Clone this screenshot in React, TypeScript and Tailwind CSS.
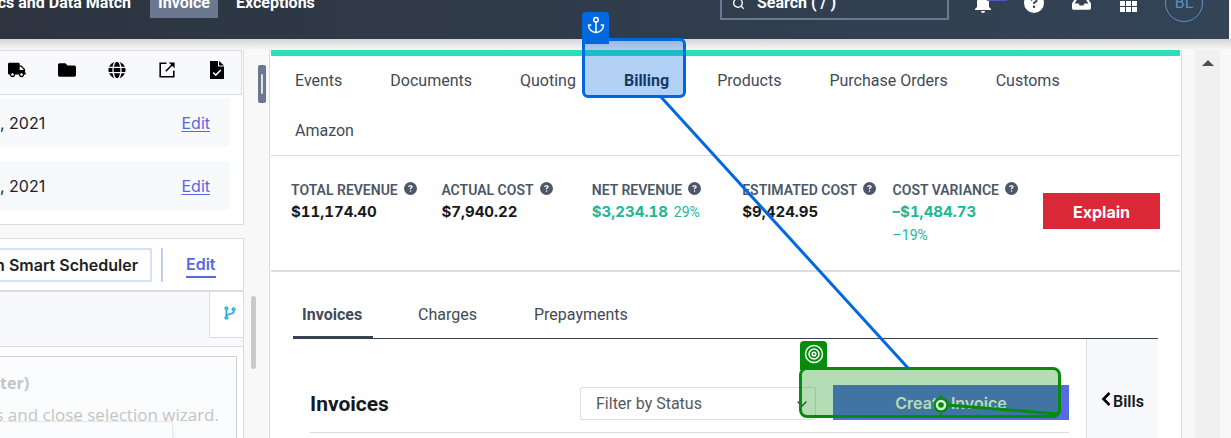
import React from "react";
import { FaTruck, FaFolder, FaInbox } from "react-icons/fa";
import { FaCircleQuestion } from "react-icons/fa6";
import { AiOutlineBranches } from "react-icons/ai";
import { MdNotifications } from "react-icons/md";
import { LuAnchor } from "react-icons/lu";
import { Search, ChevronDown } from "lucide-react";

function Globe() {
  return (
    <svg viewBox="0 0 18 18" className="size-[18px]" aria-hidden="true">
      <circle cx="9" cy="9" r="8.6" fill="#000" />
      <g fill="none" stroke="#f8f9fd" strokeWidth="1.3">
        <ellipse cx="9" cy="9" rx="4" ry="9" />
        <path d="M0 6.3h18M0 11.6h18" />
      </g>
    </svg>
  );
}

function OpenExternal() {
  return (
    <svg viewBox="0 0 18 18" className="size-[18px]" fill="none" stroke="#000" strokeWidth="1.6" aria-hidden="true">
      <path d="M8.5 2.2H2.2v13.6h13.6V9.8" />
      <path d="M7.8 10.2l6.4-6.4" />
      <path d="M10.8 1.5h5.8v5.8z" fill="#000" stroke="none" />
    </svg>
  );
}

function FileCheck() {
  return (
    <svg viewBox="0 0 16 18" className="h-[18px] w-4" aria-hidden="true">
      <path d="M1 0h8v5.5h6V18H1z" fill="#000" />
      <path d="M10 0l5 4.6h-5z" fill="#000" />
      <path d="M4.2 11.5l2.6 2.6 5-5.2" fill="none" stroke="#fff" strokeWidth="1.5" />
    </svg>
  );
}

const tools = [
  { label: "Shipping", icon: <FaTruck className="size-[18px]" /> },
  { label: "Folder", icon: <FaFolder className="size-[18px]" /> },
  { label: "Web", icon: <Globe /> },
  { label: "Open", icon: <OpenExternal /> },
  { label: "Approve file", icon: <FileCheck /> },
];

const tabs = ["Events", "Documents", "Quoting", "Billing", "Products", "Purchase Orders", "Customs", "Amazon"];

const metrics = [
  { label: "TOTAL REVENUE", value: "$11,174.40" },
  { label: "ACTUAL COST", value: "$7,940.22" },
  { label: "NET REVENUE", value: "$3,234.18", percent: "29%", good: true },
  { label: "ESTIMATED COST", value: "$9,424.95" },
  { label: "COST VARIANCE", value: "–$1,484.73", percent: "–19%", good: true },
];

function Header() {
  return (
    <div className="shrink-0 overflow-hidden pr-0.5">
      <header className="-mt-[33px] flex h-[72px] items-center bg-linear-to-r from-[#2d3440] to-[#334457] text-base font-bold text-white">
        <nav className="flex items-center whitespace-nowrap">
          <a href="#match" className="flex w-[131px] justify-end">cs and Data Match</a>
          <a href="#invoice" className="ml-[19px] flex h-[30px] w-[68px] items-center justify-center bg-[#6b7890]">Invoice</a>
          <a href="#exceptions" className="ml-[18px]">Exceptions</a>
        </nav>
        <div className="ml-auto flex items-center">
          <label className="flex h-[34px] w-[229px] items-center gap-3 border-2 border-[#6b7890] pl-2.5">
            <Search className="size-[13px] shrink-0" strokeWidth={2.5} />
            <input aria-label="Search" placeholder="Search ( / )" className="w-full bg-transparent outline-none placeholder:text-white placeholder:opacity-100" />
          </label>
          <button aria-label="Notifications" className="relative ml-6 flex w-5 justify-center">
            <MdNotifications className="size-6 shrink-0" />
            <span className="absolute -top-2 left-3 h-[18px] w-6 rounded bg-[#4f5bc4]" />
          </button>
          <button aria-label="Help" className="ml-[31px]"><FaCircleQuestion className="size-5" /></button>
          <button aria-label="Inbox" className="ml-7"><FaInbox className="size-[19px]" /></button>
          <button aria-label="Apps" className="ml-[29px] grid grid-cols-3 gap-px">
            {Array.from({ length: 9 }, (_, i) => <span key={i} className="size-[5px] bg-white" />)}
          </button>
          <button aria-label="Account" className="mr-[26px] ml-7 flex size-[38px] items-center justify-center rounded-full border border-[#5b93c8] text-base font-normal text-[#5b8fbe]">BL</button>
        </div>
      </header>
    </div>
  );
}

function DateRow() {
  return (
    <div className="flex h-[49px] w-[230px] items-center justify-between rounded-r bg-[#f8f9fd] pr-5 font-[Inter,sans-serif] text-base">
      <span>, 2021</span>
      <a href="#edit" className="text-[#5868e4] underline underline-offset-2">Edit</a>
    </div>
  );
}

function Sidebar() {
  return (
    <aside className="flex w-[244px] shrink-0 flex-col text-[#1c1e22]">
      <section className="border-r border-b border-[#dcdcdc] bg-white pb-3.5">
        <div className="mr-px flex h-[45px] items-center gap-8 border-y border-r border-[#dcdcdc] bg-[#f8f9fd] pb-1.5 pl-2 text-black">
          {tools.map((t) => <button key={t.label} aria-label={t.label} className="flex w-[18px] justify-center">{t.icon}</button>)}
        </div>
        <div className="flex flex-col gap-3.5 pt-[3px]"><DateRow /><DateRow /></div>
      </section>
      <section className="mt-[13px] flex grow flex-col border-t border-r border-[#dcdcdc] bg-white">
        <div className="flex h-[53px] shrink-0 items-center border-b-2 border-[#dcdcdc] font-[Inter,sans-serif] text-base font-semibold">
          <button className="flex h-[34px] w-[152px] items-center justify-end border-2 border-l-0 border-[#d7e1f5] pr-3 whitespace-nowrap">h Smart Scheduler</button>
          <span className="ml-[9px] h-[34px] w-0.5 bg-[#c3cfe6]" />
          <a href="#schedule" className="ml-[23px] border-b-2 border-[#5868e4] text-[#5868e4]">Edit</a>
        </div>
        <div className="flex h-[55px] shrink-0 justify-end border-b border-[#dcdcdc] bg-[#f8f9fd]">
          <button aria-label="Branch" className="flex h-[46px] w-[34px] items-center justify-center border-b border-l border-[#dcdcdc] bg-white pb-1 pl-1.5 text-[#25addb]">
            <AiOutlineBranches className="size-4" strokeWidth={40} />
          </button>
        </div>
        <div className="mt-[9px] mr-1.5 flex grow flex-col border-t border-r border-[#cfcfcf] bg-[#fafcfe] pt-3.5 font-['Open_Sans',sans-serif] text-[#c4c4c4]">
          <strong className="text-base leading-6">ter)</strong>
          <p className="mt-2 flex justify-end pr-[17px] text-[17px] leading-6 whitespace-nowrap">s and close selection wizard.</p>
          <div className="-mt-1.5 h-10 w-[173px] border-t border-r border-[#e6e6e6] shadow-md" />
        </div>
      </section>
    </aside>
  );
}

function Metrics() {
  return (
    <section className="grid h-[116px] shrink-0 grid-cols-[repeat(5,1fr)_117px] border-b-2 border-[#dcdcdc] px-5 pt-[23px]">
      {metrics.map((m) => (
        <div key={m.label} className="whitespace-nowrap">
          <div className="flex items-center gap-1.5 text-sm leading-[22px] font-semibold text-[#4c5768]">
            {m.label}
            <FaCircleQuestion className="mb-[3px] size-[13px]" />
          </div>
          <div className={m.good ? "flex max-w-[130px] flex-wrap items-center gap-x-1.5 font-[Inter,sans-serif] text-[15px] leading-[22px] font-bold text-[#21b796] tabular-nums" : "font-[Inter,sans-serif] text-[15px] leading-[22px] font-bold text-[#17191d] tabular-nums"}>
            <span>{m.value}</span>
            {m.percent && <span className={m.percent === "29%" ? "font-[Roboto,sans-serif] text-sm leading-[22px] font-normal" : "w-full font-[Roboto,sans-serif] text-sm leading-6 font-normal"}>{m.percent}</span>}
          </div>
        </div>
      ))}
      <button className="mt-3.5 h-9 bg-[#da2839] pt-px font-[Inter,sans-serif] text-base font-bold text-white">Explain</button>
    </section>
  );
}

function Main() {
  return (
    <main className="flex min-w-0 grow flex-col border-x border-[#dcdcdc] bg-white px-px">
      <div className="h-1.5 shrink-0 bg-[#29dfb8]" />
      <nav className="flex shrink-0 flex-wrap gap-y-px border-b border-[#dcdcdc] text-base text-[#424a57]">
        {tabs.map((t) => (
          <a key={t} href={"#" + t} className={t === "Billing" ? "flex h-[49px] items-center px-6 font-bold text-[#1f2733]" : "flex h-[49px] items-center px-6"}>{t}</a>
        ))}
      </nav>
      <Metrics />
      <div className="flex grow flex-col px-[22px]">
        <nav className="mt-5 flex h-[47px] shrink-0 gap-9 border-b border-[#39424f] text-base text-[#424a57]">
          <a href="#invoices" className="-mb-px h-[47px] min-w-20 border-b-3 border-[#39424f] px-[9px] pt-[11px] leading-6 font-bold">Invoices</a>
          <a href="#charges" className="min-w-20 px-[9px] pt-[11px] leading-6">Charges</a>
          <a href="#prepayments" className="px-[9px] pt-[11px] leading-6">Prepayments</a>
        </nav>
        <div className="flex grow">
          <section className="grow px-[17px]">
            <div className="flex h-[94px] items-end border-b border-[#dcdcdc] pb-3">
              <h2 className="grow text-[21px] leading-8 font-bold text-[#17191d]">Invoices</h2>
              <div className="relative mr-[17px] flex items-center">
                <select aria-label="Filter by Status" className="h-[33px] w-[236px] appearance-none rounded-xs border border-[#dfdfdf] bg-white pt-px pl-[15px] text-base text-[#55585e]">
                  <option>Filter by Status</option>
                </select>
                <ChevronDown className="pointer-events-none absolute right-1.5 size-4 text-[#333]" />
              </div>
              <button className="h-[35px] w-[236px] bg-[#586ae6] font-[Inter,sans-serif] text-base font-semibold text-white">Create Invoice</button>
            </div>
          </section>
          <button className="flex w-[72px] items-start gap-0.5 border-l border-[#dcdcdc] bg-[#f8f9fd] pt-[51px] pl-3.5 text-base leading-6 font-semibold text-[#17191d]">
            <svg viewBox="0 0 10 14" className="mt-0.5 h-3.5 w-2.5" aria-hidden="true"><path d="M8.5 1L2.5 7l6 6" fill="none" stroke="#000" strokeWidth="2.6" /></svg>
            Bills
          </button>
        </div>
      </div>
    </main>
  );
}

function Annotations() {
  return (
    <div className="pointer-events-none absolute inset-0">
      <div className="absolute top-3 left-[582px] flex h-8 w-[27px] justify-center rounded-t bg-[#0069e0] pt-1 text-white"><LuAnchor className="size-[18px]" /></div>
      <div className="absolute top-[38px] left-[582px] h-[60px] w-[104px] rounded-md border-3 border-[#0069e0]" />
      <div className="absolute top-[39px] left-[583px] h-[58px] w-[102px] rounded-md bg-[#0069e0]/30" />
      <div className="absolute top-[341px] left-[800px] flex h-[29px] w-[27px] justify-center rounded-t bg-[#058c0a] pt-[3px]">
        <svg viewBox="0 0 20 20" className="size-5" fill="none" stroke="#fff" strokeWidth="1.5" aria-hidden="true">
          <circle cx="10" cy="10" r="8.5" /><circle cx="10" cy="10" r="5" /><circle cx="10" cy="10" r="1.8" />
        </svg>
      </div>
      <div className="absolute top-[367px] left-[799px] h-[51px] w-[262px] rounded-lg border-3 border-[#058c0a] bg-[#058c0a]/30 bg-clip-padding" />
      <svg className="absolute inset-0 size-full" fill="none" aria-hidden="true">
        <path d="M661 97L908 368" stroke="#0069e0" strokeWidth="3" />
        <path d="M947 405L1058 414" stroke="#058c0a" strokeWidth="3" />
        <circle cx="941" cy="405" r="6.5" fill="#dceee2" stroke="#058c0a" strokeWidth="2.5" />
        <circle cx="941" cy="405" r="2.8" fill="#058c0a" />
        <path d="M941 395v4M941 411v4" stroke="#058c0a" strokeWidth="2" />
      </svg>
    </div>
  );
}

export default function App() {
  return (
    <div className="relative flex h-screen flex-col overflow-hidden bg-[#f8f8f8] font-[Roboto,sans-serif]">
      <Header />
      <div className="h-[11px] shrink-0 bg-linear-to-b from-[#d5d5d5] to-[#f8f8f8]" />
      <div className="flex min-h-0 grow">
        <Sidebar />
        <div className="flex w-[25px] shrink-0 flex-col items-start">
          <span className="mt-[15px] ml-3.5 flex h-[38px] w-2 items-center justify-center rounded-xs bg-[#6b7890]"><i className="h-5 w-0.5 rounded bg-[#dfe3ea]" /></span>
          <span className="mt-[193px] ml-[7px] h-[73px] w-[5px] rounded-full bg-[#cacaca]" />
        </div>
        <Main />
        <div className="ml-[13px] flex w-[25px] shrink-0 justify-center bg-[#f0f0f0] pt-2.5">
          <svg viewBox="0 0 12 6" className="h-1.5 w-3" aria-hidden="true"><path d="M6 0l6 6H0z" fill="#505050" /></svg>
        </div>
        <div className="w-[11px] shrink-0" />
      </div>
      <Annotations />
    </div>
  );
}
